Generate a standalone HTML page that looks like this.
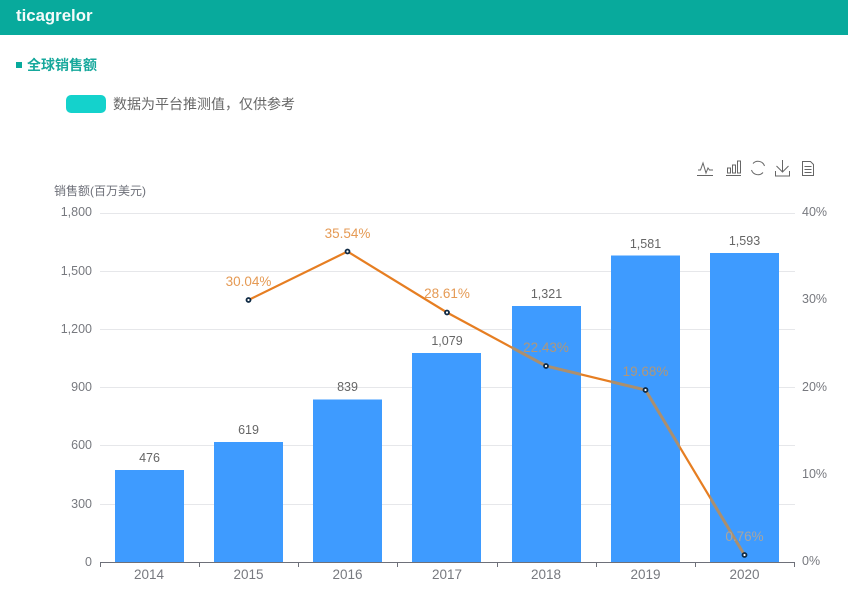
<!DOCTYPE html>
<html lang="zh">
<head>
<meta charset="utf-8">
<style>
html,body{margin:0;padding:0;background:#fff;}
body{width:848px;height:592px;overflow:hidden;position:relative;font-family:"Liberation Sans","Noto Sans CJK SC",sans-serif;}
.hdr{position:absolute;left:0;top:0;width:848px;height:35px;background:#08aa9c;color:#f4fbfa;font-weight:bold;font-size:16.800px;line-height:32px;}
.hdr span{position:absolute;left:16px;top:0;}
.sq{position:absolute;left:16px;top:62px;width:6px;height:6px;background:#08aa9c;}
.ttl{position:absolute;left:27px;top:56px;font-size:14px;font-weight:bold;color:#16a89c;line-height:18px;}
.pill{position:absolute;left:66px;top:95px;width:40px;height:18px;border-radius:5px;background:#14d2cc;}
.note{position:absolute;left:113px;top:95px;font-size:14px;color:#666;line-height:18px;}
svg{position:absolute;left:0;top:0;}
text{font-family:"Liberation Sans","Noto Sans CJK SC",sans-serif;}
</style>
</head>
<body>
<div class="hdr"><span>ticagrelor</span></div>
<div class="sq"></div>
<div class="ttl">全球销售额</div>
<div class="pill"></div>
<div class="note">数据为平台推测值，仅供参考</div>
<svg width="848" height="592" viewBox="0 0 848 592">
<defs>
<clipPath id="bars">
<rect x="115" y="470" width="69" height="92"/>
<rect x="214" y="442" width="69" height="120"/>
<rect x="313" y="399.500" width="69" height="162.500"/>
<rect x="412" y="353" width="69" height="209"/>
<rect x="512" y="306" width="69" height="256"/>
<rect x="611" y="255.500" width="69" height="306.500"/>
<rect x="710" y="253" width="69" height="309"/>
</clipPath>
</defs>
<g stroke="#e6e7ea" stroke-width="1">
<line x1="100" y1="213.500" x2="795" y2="213.500"/>
<line x1="100" y1="271.500" x2="795" y2="271.500"/>
<line x1="100" y1="329.500" x2="795" y2="329.500"/>
<line x1="100" y1="387.500" x2="795" y2="387.500"/>
<line x1="100" y1="445.500" x2="795" y2="445.500"/>
<line x1="100" y1="504.500" x2="795" y2="504.500"/>
</g>
<g fill="#3e9bff">
<rect x="115" y="470" width="69" height="92"/>
<rect x="214" y="442" width="69" height="120"/>
<rect x="313" y="399.500" width="69" height="162.500"/>
<rect x="412" y="353" width="69" height="209"/>
<rect x="512" y="306" width="69" height="256"/>
<rect x="611" y="255.500" width="69" height="306.500"/>
<rect x="710" y="253" width="69" height="309"/>
</g>
<g stroke="#6e7079" stroke-width="1" fill="none">
<line x1="100" y1="562.500" x2="795" y2="562.500"/>
<path d="M100.500 562v5M199.500 562v5M298.500 562v5M397.500 562v5M497.500 562v5M596.500 562v5M695.500 562v5M794.500 562v5"/>
</g>
<g fill="#77797f" font-size="12.500" text-anchor="end">
<text x="92" y="216">1,800</text>
<text x="92" y="275">1,500</text>
<text x="92" y="333">1,200</text>
<text x="92" y="391">900</text>
<text x="92" y="449">600</text>
<text x="92" y="508">300</text>
<text x="92" y="566">0</text>
</g>
<g fill="#77797f" font-size="12.500">
<text x="802" y="216">40%</text>
<text x="802" y="303">30%</text>
<text x="802" y="391">20%</text>
<text x="802" y="478">10%</text>
<text x="802" y="565">0%</text>
</g>
<text x="54" y="195" fill="#6e7079" font-size="12">销售额(百万美元)</text>
<g fill="#77797f" font-size="13.500" text-anchor="middle">
<text x="149" y="579">2014</text>
<text x="248.500" y="579">2015</text>
<text x="347.500" y="579">2016</text>
<text x="447" y="579">2017</text>
<text x="546" y="579">2018</text>
<text x="645.500" y="579">2019</text>
<text x="744.500" y="579">2020</text>
</g>
<g fill="#666" font-size="12.500" text-anchor="middle">
<text x="149.500" y="462">476</text>
<text x="248.500" y="434">619</text>
<text x="347.500" y="391">839</text>
<text x="447" y="345">1,079</text>
<text x="546.500" y="298">1,321</text>
<text x="645.500" y="248">1,581</text>
<text x="744.500" y="245">1,593</text>
</g>
<polyline points="248.500,300 347.500,251.500 447,312.500 546,366 645.500,390 744.500,555" fill="none" stroke="#e67e22" stroke-width="2.200"/>
<polyline clip-path="url(#bars)" points="248.500,300 347.500,251.500 447,312.500 546,366 645.500,390 744.500,555" fill="none" stroke="#ab8f6e" stroke-width="3"/>
<g fill="#fff" stroke="#0f2a44" stroke-width="1.800">
<circle cx="248.500" cy="300" r="2"/>
<circle cx="347.500" cy="251.500" r="2"/>
<circle cx="447" cy="312.500" r="2"/>
<circle cx="546" cy="366" r="2"/>
<circle cx="645.500" cy="390" r="2"/>
<circle cx="744.500" cy="555" r="2"/>
</g>
<g font-size="13.500" text-anchor="middle">
<text x="248.500" y="286" fill="#e59a54">30.04%</text>
<text x="347.500" y="238" fill="#e59a54">35.54%</text>
<text x="447" y="298" fill="#e59a54">28.61%</text>
<text x="546" y="352" fill="#b0977a">22.43%</text>
<text x="645.500" y="376" fill="#b0977a">19.68%</text>
<text x="744.500" y="541" fill="#a9a59e">0.76%</text>
</g>
<g fill="none" stroke="#666" stroke-width="1">
<path d="M697 175.500h16M698 170h2.500l2.500-7 3 10 2-5 1.500 2h3.500"/>
<path d="M726 175.500h15M727.500 173v-5h3v5zM732.500 173v-8h3v8zM737.500 173v-12h3v12z"/>
<path d="M764.500 166a6.800 6.800 0 0 0-11.500-2.500M751.500 170a6.800 6.800 0 0 0 11.500 2.500"/>
<path d="M782.500 160v12M776.500 166l6 6 6-6M775.500 171v5h14v-5"/>
<path d="M802.500 161.500h8l3 3v11h-11zM804.500 166.500h7M804.500 169.500h7M804.500 172.500h7"/>
</g>
</svg>
</body>
</html>
